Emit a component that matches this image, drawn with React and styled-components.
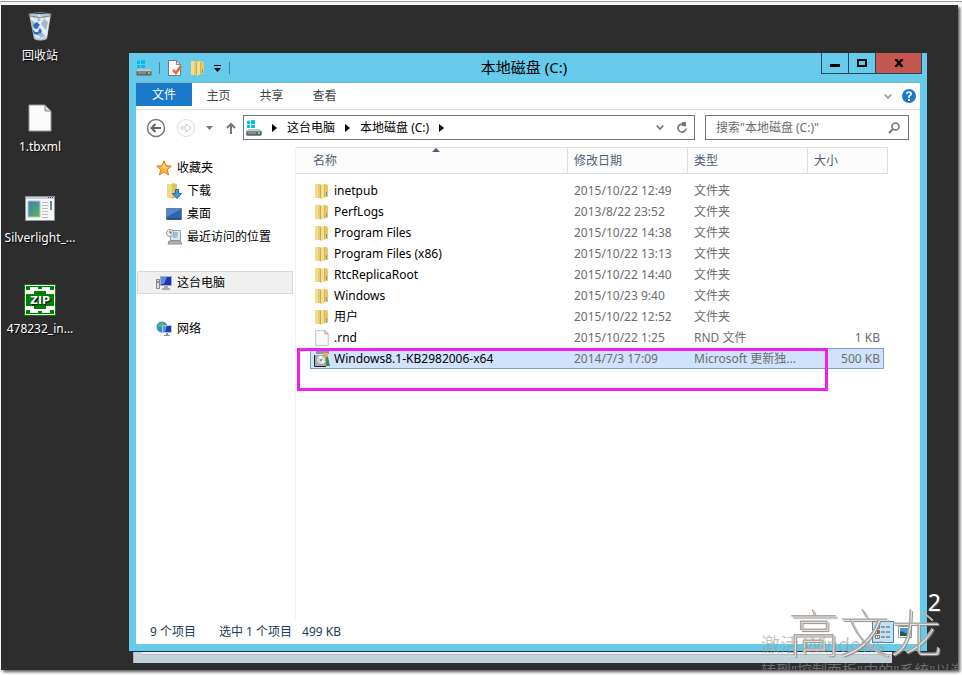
import React from 'react';
import styled, { createGlobalStyle, css } from 'styled-components';

const GlobalStyle = createGlobalStyle`
    * {
        box-sizing: border-box;
    }
    body {
        margin: 0;
        background: #fff;
        color: #000;
        font: 12px/16px "Noto Sans", "Noto Sans CJK SC", sans-serif;
    }
    button, input {
        font: inherit;
        color: inherit;
        margin: 0;
        padding: 0;
        border: 0;
        background: none;
    }
    a {
        color: inherit;
        text-decoration: none;
    }
    svg {
        display: block;
        flex: none;
    }
`

const Page = styled.div`
    display: flex;
    min-height: 100vh;
    padding: 5px 4px 5px 1px;
    background: linear-gradient(#fdfdfd 1px, #999 1px, #999 2px, #f4f4f4 2px, #f4f4f4 4px, #fff 4px);
`

const Desktop = styled.main`
    position: relative;
    flex: 1;
    overflow: hidden;
    background: #2d2d2d;
    box-shadow: 2px 2px 3px #555;
`

// ---- desktop shortcuts

const Shortcuts = styled.nav`
    display: flex;
    flex-direction: column;
    width: 78px;
`

const Shortcut = styled.a`
    display: flex;
    flex-direction: column;
    align-items: center;
    gap: 5px;
    height: 91px;
    padding-top: 6px;
    color: #fff;
    white-space: nowrap;
    text-shadow: 1px 1px 1px #000;
`

// ---- windows

const BackWindow = styled.div`
    position: absolute;
    left: 132px;
    right: 66px;
    bottom: 7px;
    height: 60px;
    padding: 0 0 8px 8px;
    background: #c2d4da;
    border-left: 1px solid #a3b3b8;
`

const BackBody = styled.div`
    height: 100%;
    background: #f0f0f0;
    border-bottom: 1px solid #aebdc2;
`

const Window = styled.section`
    position: absolute;
    top: 48px;
    left: 128px;
    right: 31px;
    bottom: 19px;
    display: flex;
    flex-direction: column;
    padding: 0 7px 7px;
    background: #66cbea;
    box-shadow: 0 1px 0 #1d3138;
`

const TitleBar = styled.header`
    display: grid;
    grid-template-columns: 1fr auto 1fr;
    height: 30px;
    flex: none;
    border-bottom: 1px solid #7fb0c2;
`

const QuickAccess = styled.div`
    display: flex;
    align-items: center;
    gap: 7px;
    button {
        display: block;
    }
`

const Divider = styled.span`
    width: 1px;
    height: 12px;
    background: #4a8299;
`

const Title = styled.h1`
    margin: 0;
    padding-right: 8px;
    font-size: 15px;
    line-height: 29px;
    font-weight: 400;
`

const WindowButtons = styled.div`
    display: flex;
    justify-self: end;
    height: 21px;
    margin-right: -2px;
`

const WindowButton = styled.button`
    display: flex;
    align-items: center;
    justify-content: center;
    width: ${props => props.$close ? '47px' : '27px'};
    border: 1px solid #1f4756;
    border-top: 0;
    ${props => !props.$close && css`border-right: 0;`}
    background: ${props => props.$close ? '#c45850' : 'transparent'};
`

const Ribbon = styled.div`
    display: flex;
    align-items: center;
    height: 27px;
    flex: none;
    padding-right: 4px;
    background: #fff;
    border-bottom: 1px solid #dadbdc;
`

const Tab = styled.button`
    width: 53px;
    height: 23px;
    color: #444;
`

const FileTab = styled(Tab)`
    width: 56px;
    align-self: flex-start;
    background: #1979ca;
    color: #fff;
`

const RibbonTools = styled.div`
    display: flex;
    align-items: center;
    gap: 10px;
    margin-left: auto;
`

const NavBar = styled.div`
    display: flex;
    align-items: center;
    height: 37px;
    flex: none;
    padding: 0 11px 2px 10px;
    background: #fff;
`

const NavButtons = styled.div`
    display: flex;
    align-items: center;
    gap: 10px;
    width: 97px;
`

const Address = styled.div`
    display: flex;
    align-items: center;
    gap: 10px;
    flex: 1;
    height: 25px;
    margin-right: 10px;
    padding: 0 6px 0 2px;
    border: 1px solid #777;
`

const AddressTools = styled.div`
    display: flex;
    align-items: center;
    gap: 12px;
    margin-left: auto;
`

const Search = styled.label`
    display: flex;
    align-items: center;
    width: 204px;
    height: 25px;
    padding: 0 8px 0 10px;
    border: 1px solid #777;
    input {
        flex: 1;
        min-width: 0;
        outline: 0;
    }
    input::placeholder {
        color: #6d6d6d;
        opacity: 1;
    }
`

const Body = styled.div`
    display: flex;
    flex: 1;
    min-height: 0;
    background: #fff;
`

const SidePane = styled.nav`
    width: 159px;
    flex: none;
    padding: 9px 2px 0 1px;
`

const PaneGroup = styled.ul`
    list-style: none;
    margin: 0 0 23px;
    padding: 0;
`

const PaneLink = styled.a`
    display: flex;
    align-items: center;
    gap: 5px;
    height: 23px;
    padding-left: ${props => props.$child ? '28px' : '18px'};
    border: 1px solid ${props => props.$current ? '#d9d9d9' : 'transparent'};
    background: ${props => props.$current ? '#f0f0f0' : 'transparent'};
    white-space: nowrap;
`

const ListPane = styled.div`
    position: relative;
    flex: 1;
    min-width: 0;
    border-left: 1px solid #f3f3f3;
`

const FileTable = styled.table`
    display: block;
    width: 592px;
    thead, tbody {
        display: block;
    }
    tbody {
        padding: 6px 4px 0 14px;
    }
    th, td {
        display: flex;
        align-items: center;
        padding: 0 6px;
        font-weight: 400;
        white-space: nowrap;
    }
`

const HeadRow = styled.tr`
    display: grid;
    grid-template-columns: 272px 120px 120px 80px;
    height: 27px;
    background: #fcfcfc;
    border: 1px solid #e0e0e0;
    border-left: 0;
    color: #4c607a;
    th {
        position: relative;
        border-right: 1px solid #e0e0e0;
    }
    th:first-child {
        padding-left: 17px;
    }
    th:last-child {
        border-right: 0;
    }
`

const SortMark = styled.svg`
    position: absolute;
    top: 0;
    left: 50%;
`

const FileRow = styled.tr`
    display: grid;
    grid-template-columns: 258px 120px 120px 76px;
    height: 21px;
    color: #6d6d6d;
    ${props => props.$selected && css`
        background: #cfe3fc;
        box-shadow: inset 0 0 0 1px #7ba0cf;
    `}
    td:first-child {
        gap: 4px;
        padding-left: 4px;
        color: #000;
    }
    td:last-child {
        justify-content: flex-end;
        padding-right: 4px;
    }
`

const Highlight = styled.div`
    position: absolute;
    top: 201px;
    left: 1px;
    width: 531px;
    height: 43px;
    border: 3px solid #f01ef0;
`

const StatusBar = styled.footer`
    display: flex;
    align-items: center;
    gap: 23px;
    height: 24px;
    flex: none;
    padding: 0 4px 0 14px;
    background: #fff;
    color: #1e395b;
`

const Selection = styled.div`
    display: flex;
    gap: 10px;
`

const ViewButtons = styled.div`
    display: flex;
    align-items: center;
    margin-left: auto;
`

const ViewButton = styled.button`
    display: flex;
    align-items: center;
    justify-content: center;
    width: 22px;
    height: 22px;
    border: 1px solid ${props => props.$active ? '#3f8ab0' : 'transparent'};
    background: ${props => props.$active ? '#c0e2f6' : 'transparent'};
`

// ---- texts lying over the corner of the desktop

const Overlay = styled.div`
    position: absolute;
    white-space: nowrap;
    pointer-events: none;
`

const Activation = styled(Overlay)`
    left: 760px;
    bottom: -11px;
    color: rgba(155, 155, 155, 0.6);
    font-size: 19px;
    line-height: 28px;
    p {
        margin: 0;
    }
    p + p {
        font-size: 15px;
        line-height: 22px;
    }
`

const Signature = styled(Overlay)`
    right: 17px;
    bottom: 10px;
    color: #aaa;
    font-family: "Noto Sans CJK SC", sans-serif;
    font-size: 51px;
    font-weight: 100;
    line-height: 60px;
    text-shadow: 1px 1px 0 #e8e2da, 2px 2px 1px #8f8a86;
`

const Counter = styled(Overlay)`
    right: 17px;
    bottom: 56px;
    color: #fff;
    font-size: 23px;
    line-height: 24px;
    text-shadow: 1px 1px 1px #555;
`

// ---- icons

const BinIcon = () => (
    <svg width="32" height="32" viewBox="0 0 32 32">
        <path d="M5 3h22l-4 25q-7 3-13 0z" fill="#b9c7d4" />
        <path d="M6 4l5 4 4-5 5 5 6-4-3 21-6 3-6-2z" fill="#e4ecf2" />
        <path d="M7 9l5 3-1 6-3-2zM20 8l4 3-2 8-5-6zM12 22l5-2 4 5-4 2zM13 5l4 4-3 2z" fill="#a3b6c7" />
        <path d="M5 3q11-3 22 0l-1 2q-10 3-20 0z" fill="none" stroke="#7c8894" />
        <path d="M9 14l4-3 3 3-2 2 1 1-4 1zM8 17l3 4h4l-1 3-4-1zM16 17l2 3-2 3-2-3z" fill="#2c69c8" />
    </svg>
)

const PageIcon = ({ size, viewBox }) => (
    <svg width={size} height={size} viewBox={viewBox}>
        <path d="M1 1h16l6 6v20H1z" fill="#fafafa" stroke="#999" />
        <path d="M17 1v6h6z" fill="#ddd" stroke="#888" />
    </svg>
)

const AppIcon = () => (
    <svg width="32" height="32" viewBox="0 0 32 32">
        <defs>
            <linearGradient id="app" x1="0" y1="0" x2="1" y2="1">
                <stop offset="0" stopColor="#4776b2" />
                <stop offset="0.5" stopColor="#4b9a8b" />
                <stop offset="1" stopColor="#62b548" />
            </linearGradient>
        </defs>
        <path d="M1.500 3.500h29v24h-29z" fill="#f7f7f7" stroke="#8d959e" />
        <path d="M2 4h28v2H2z" fill="#c6ccd4" />
        <path d="M24 4h1v1h-1zM26 4h1v1h-1zM28 4h1v1h-1z" fill="#445" />
        <path d="M4 8h12v16H4z" fill="url(#app)" stroke="#b6bfd0" />
        <path d="M18 9.500h6M18 12.500h6M18 15.500h6M18 18.500h6M18 21.500h6M18 24.500h6" stroke="#bbb" />
        <path d="M26 8h2v9h-2z" fill="url(#app)" />
    </svg>
)

const ZipIcon = () => (
    <svg width="32" height="32" viewBox="0 0 32 32">
        <path d="M0 0h32v32H0z" fill="#008000" />
        <path d="M1.500 1.500h29v29h-29z" fill="none" stroke="#fff" />
        <path d="M2 6h4V3h6v3h-2v4H2zM30 6h-4V3h-6v3h2v4h8zM2 26h4v3h6v-3h-2v-4H2zM30 26h-4v3h-6v-3h2v-4h8z" fill="#fff" />
        <path d="M10 3h12v4H10zM10 25h12v4H10z" fill="#fff" />
        <path d="M14 2h4v3h-4zM14 27h4v3h-4z" fill="#008000" />
        <text x="16" y="20" fill="#fff" fontFamily="DejaVu Sans" fontSize="11" fontWeight="700" textAnchor="middle">ZIP</text>
    </svg>
)

const DriveIcon = () => (
    <svg width="16" height="16" viewBox="0 0 16 16">
        <path d="M1 1l3-.5V4H1zM5 .3L9 0v4H5zM1 5h3v3H1zM5 5h4v3H5z" fill="#00bdf2" />
        <path d="M2 9h12l2 3H0z" fill="#c3c8cb" />
        <path d="M.5 11.500h15v3q0 1-1 1h-13q-1 0-1-1z" fill="#59666e" stroke="#7e888e" />
        <path d="M2 13h8" stroke="#a5b2b8" />
        <path d="M12 12h2v2h-2z" fill="#6fe53c" />
    </svg>
)

const PropertiesIcon = () => (
    <svg width="16" height="16" viewBox="0 0 16 16">
        <path d="M1.500.5h8l4 4v11h-12z" fill="#fafafa" stroke="#777" />
        <path d="M9.500.5v4h4z" fill="#ddd" stroke="#888" />
        <path d="M6 10l3 3 5-7" fill="none" stroke="#e56a3c" strokeWidth="2.500" />
    </svg>
)

const FolderIcon = () => (
    <svg width="16" height="16" viewBox="0 0 16 16">
        <path d="M1 1h6v14H1z" fill="#e8cc70" />
        <path d="M1 1h3v14H1z" fill="#f2dc8d" />
        <path d="M9 1h4l1 2v11H9z" fill="#e6c868" />
        <path d="M6 2l5-1v13l-4 2-1-1z" fill="#f3de93" />
        <path d="M6 2h1v13.500l-1-.5z" fill="#cfa840" />
        <path d="M10 1.500h1V14l-1 .5z" fill="#d6b34f" />
        <path d="M12 9h1v4h-1z" fill="#4aa5dc" />
    </svg>
)

const DownloadIcon = () => (
    <svg width="16" height="16" viewBox="0 0 16 16">
        <path d="M1 1h5v14H1z" fill="#f1d98a" />
        <path d="M6 0l5 1v13l-5 2z" fill="#e2be5c" />
        <path d="M9.500 6.500h3v4h3l-4.500 5-4.500-5h3z" fill="#3a9be0" stroke="#1b6bb0" />
    </svg>
)

const StarIcon = () => (
    <svg width="16" height="16" viewBox="0 0 16 16">
        <path d="M8 .8l2 5 5.400.3-4.200 3.500 1.400 5.400L8 12l-4.600 3 1.400-5.400L.6 6.100 6 5.800z" fill="#fdb73c" stroke="#e07a18" />
        <path d="M8 3l1.200 4h3L9 9l-3-2z" fill="#ffe28c" />
    </svg>
)

const ScreenIcon = () => (
    <svg width="16" height="16" viewBox="0 0 16 16">
        <path d="M.5 2.500h15v11H.5z" fill="#2d62b5" stroke="#6c8093" />
        <path d="M1 3h14l-14 8z" fill="#5287d2" />
        <path d="M1 13h14" stroke="#1c3052" />
    </svg>
)

const RecentIcon = () => (
    <svg width="16" height="16" viewBox="0 0 16 16">
        <path d="M4.500 1.500h10v10h-10z" fill="#dce8ef" stroke="#8da0ab" />
        <path d="M7 4h5M7 6h5M7 8h4" stroke="#5aa0c8" />
        <path d="M3 12h11l2 3H2z" fill="#b4bbc0" stroke="#85898c" />
        <circle cx="4" cy="4" r="3.500" fill="#f3f3f3" stroke="#999" />
        <path d="M4 2v2h2" fill="none" stroke="#555" />
    </svg>
)

const ComputerIcon = () => (
    <svg width="16" height="16" viewBox="0 0 16 16">
        <path d="M.5 4.500h3v9h-3z" fill="#ddd" stroke="#888" />
        <path d="M1 6h2v2H1z" fill="#66b75c" />
        <path d="M4.500 1.500h11v9h-11z" fill="#1d35b4" stroke="#a9adb5" />
        <path d="M5 2h6l-3 7H5z" fill="#5b8ce8" />
        <path d="M8 11h4v2h2v2H6v-2h2z" fill="#aaa" />
    </svg>
)

const NetworkIcon = () => (
    <svg width="16" height="16" viewBox="0 0 16 16">
        <circle cx="6" cy="6" r="5.500" fill="#2b8fd8" />
        <path d="M2 3l4-2 2 2-3 3H2zM6 8l3-1v3l-3 1z" fill="#58bd4d" />
        <path d="M6.500 4.500h9v7h-9z" fill="#1a3fbe" stroke="#bac5d4" />
        <path d="M7 5h4l-2 6H7z" fill="#5b94ea" />
        <path d="M10 12h2v2h2v1H8v-1h2z" fill="#88929e" />
    </svg>
)

const UpdateIcon = () => (
    <svg width="16" height="16" viewBox="0 0 16 16">
        <path d="M2 0h13v3H2z" fill="#8a97a8" />
        <path d="M9 2h5v10H9z" fill="#f3b51b" />
        <path d="M11 6h3l2 9h-5z" fill="#3a8a5a" />
        <path d="M1 4h11v11H1z" fill="#a9a9a9" />
        <path d="M.5 4v11.500H12" fill="none" stroke="#222" />
        <circle cx="7" cy="9" r="4" fill="#d6d6d6" />
        <path d="M7 9l-3-3q3-2 4-1zM7 9l4 1q-1 3-3 3z" fill="#f4f4f4" />
        <circle cx="7" cy="9" r="1" fill="#777" />
    </svg>
)

const Chevron = ({ color = '#777' }) => (
    <svg width="8" height="7" viewBox="0 0 8 7">
        <path d="M.7 1.500L4 5l3.300-3.500" fill="none" stroke={color} strokeWidth="1.800" />
    </svg>
)

const Crumb = () => (
    <svg width="5" height="8" viewBox="0 0 5 8">
        <path d="M0 0l5 4-5 4z" fill="#000" />
    </svg>
)

const RoundArrow = ({ back }) => (
    <svg width="20" height="20" viewBox="0 0 20 20">
        <circle cx="10" cy="10" r="8.500" fill="none" stroke={back ? '#777' : '#ddd'} strokeWidth={back ? 1.5 : 1} />
        {back
            ? <path d="M15 10H6M9.500 6L5.500 10l4 4" fill="none" stroke="#666" strokeWidth="2" />
            : <path d="M5 9h5V6l5 4-5 4v-3H5z" fill="none" stroke="#ccc" />}
    </svg>
)

const UpArrow = () => (
    <svg width="16" height="12" viewBox="0 0 16 12">
        <path d="M8 12V2M4 6l4-4 4 4" fill="none" stroke="#777" strokeWidth="2" />
    </svg>
)

const shortcuts = [
    { name: '回收站', icon: <BinIcon /> },
    { name: '1.tbxml', icon: <PageIcon size={32} viewBox="-4 -2 32 32" /> },
    { name: 'Silverlight_...', icon: <AppIcon /> },
    { name: '478232_in...', icon: <ZipIcon /> },
]

const places = [
    [
        { name: '收藏夹', icon: <StarIcon /> },
        { name: '下载', icon: <DownloadIcon />, child: true },
        { name: '桌面', icon: <ScreenIcon />, child: true },
        { name: '最近访问的位置', icon: <RecentIcon />, child: true },
    ],
    [{ name: '这台电脑', icon: <ComputerIcon />, current: true }],
    [{ name: '网络', icon: <NetworkIcon /> }],
]

const files = [
    { name: 'inetpub', date: '2015/10/22 12:49', type: '文件夹' },
    { name: 'PerfLogs', date: '2013/8/22 23:52', type: '文件夹' },
    { name: 'Program Files', date: '2015/10/22 14:38', type: '文件夹' },
    { name: 'Program Files (x86)', date: '2015/10/22 13:13', type: '文件夹' },
    { name: 'RtcReplicaRoot', date: '2015/10/22 14:40', type: '文件夹' },
    { name: 'Windows', date: '2015/10/23 9:40', type: '文件夹' },
    { name: '用户', date: '2015/10/22 12:52', type: '文件夹' },
    { name: '.rnd', date: '2015/10/22 1:25', type: 'RND 文件', size: '1 KB', icon: <PageIcon size={16} viewBox="0 0 24 28" /> },
    { name: 'Windows8.1-KB2982006-x64', date: '2014/7/3 17:09', type: 'Microsoft 更新独...', size: '500 KB', icon: <UpdateIcon />, selected: true },
]

const Explorer = () => (
    <Window>
        <TitleBar>
            <QuickAccess>
                <DriveIcon />
                <Divider />
                <button aria-label="属性"><PropertiesIcon /></button>
                <button aria-label="新建文件夹"><FolderIcon /></button>
                <button aria-label="自定义快速访问工具栏">
                    <svg width="9" height="8" viewBox="0 0 9 8">
                        <path d="M1 1h7v1H1zM1 4h7L4.500 8z" fill="#000" />
                    </svg>
                </button>
                <Divider />
            </QuickAccess>
            <Title>本地磁盘 (C:)</Title>
            <WindowButtons>
                <WindowButton aria-label="最小化">
                    <svg width="10" height="10" viewBox="0 0 10 10"><path d="M0 6h10v3H0z" /></svg>
                </WindowButton>
                <WindowButton aria-label="最大化">
                    <svg width="10" height="8" viewBox="0 0 10 8"><path d="M1 1h8v6H1z" fill="none" stroke="#000" strokeWidth="2" /></svg>
                </WindowButton>
                <WindowButton $close aria-label="关闭">
                    <svg width="10" height="8" viewBox="0 0 10 8"><path d="M1.500 0l7 8M8.500 0l-7 8" stroke="#000" strokeWidth="2.500" /></svg>
                </WindowButton>
            </WindowButtons>
        </TitleBar>
        <Ribbon>
            <FileTab>文件</FileTab>
            <Tab>主页</Tab>
            <Tab>共享</Tab>
            <Tab>查看</Tab>
            <RibbonTools>
                <Chevron color="#999" />
                <button aria-label="帮助">
                    <svg width="14" height="14" viewBox="0 0 14 14">
                        <circle cx="7" cy="7" r="7" fill="#1979ca" />
                        <path d="M4.800 5q0-2 2.200-2t2.200 1.800Q9.200 6 7 7.200V9" fill="none" stroke="#fff" strokeWidth="1.600" />
                        <path d="M6 10h2v2H6z" fill="#fff" />
                    </svg>
                </button>
            </RibbonTools>
        </Ribbon>
        <NavBar>
            <NavButtons>
                <button aria-label="后退"><RoundArrow back /></button>
                <button aria-label="前进"><RoundArrow /></button>
                <svg width="7" height="4" viewBox="0 0 7 4"><path d="M0 0h7L3.500 4z" fill="#777" /></svg>
                <button aria-label="上移"><UpArrow /></button>
            </NavButtons>
            <Address>
                <DriveIcon />
                <Crumb />
                <a href="#pc">这台电脑</a>
                <Crumb />
                <a href="#c">本地磁盘 (C:)</a>
                <Crumb />
                <AddressTools>
                    <Chevron />
                    <button aria-label="刷新">
                        <svg width="12" height="12" viewBox="0 0 12 12">
                            <path d="M7 2.200A4 4 0 1 0 10 6.500" fill="none" stroke="#777" strokeWidth="1.700" />
                            <path d="M6 0h4v4.500L6 4z" fill="#777" />
                        </svg>
                    </button>
                </AddressTools>
            </Address>
            <Search>
                <input type="text" aria-label="搜索" placeholder={'搜索"本地磁盘 (C:)"'} />
                <svg width="12" height="12" viewBox="0 0 12 12">
                    <circle cx="7.500" cy="4.500" r="3.500" fill="none" stroke="#777" strokeWidth="1.600" />
                    <path d="M5 7l-4 4" stroke="#777" strokeWidth="2" />
                </svg>
            </Search>
        </NavBar>
        <Body>
            <SidePane>
                {places.map((group, i) => (
                    <PaneGroup key={i}>
                        {group.map(place => (
                            <li key={place.name}>
                                <PaneLink href="#place" $child={place.child} $current={place.current}>
                                    {place.icon}
                                    {place.name}
                                </PaneLink>
                            </li>
                        ))}
                    </PaneGroup>
                ))}
            </SidePane>
            <ListPane>
                <FileTable>
                    <thead>
                        <HeadRow>
                            <th>
                                名称
                                <SortMark width="8" height="4" viewBox="0 0 8 4"><path d="M0 4l4-4 4 4z" fill="#4c607a" /></SortMark>
                            </th>
                            <th>修改日期</th>
                            <th>类型</th>
                            <th>大小</th>
                        </HeadRow>
                    </thead>
                    <tbody>
                        {files.map(file => (
                            <FileRow key={file.name} $selected={file.selected}>
                                <td>{file.icon || <FolderIcon />}{file.name}</td>
                                <td>{file.date}</td>
                                <td>{file.type}</td>
                                <td>{file.size}</td>
                            </FileRow>
                        ))}
                    </tbody>
                </FileTable>
                <Highlight />
            </ListPane>
        </Body>
        <StatusBar>
            <span>9 个项目</span>
            <Selection>
                <span>选中 1 个项目</span>
                <span>499 KB</span>
            </Selection>
            <ViewButtons>
                <ViewButton $active aria-label="详细信息">
                    <svg width="16" height="14" viewBox="0 0 16 14">
                        <path d="M.5.5h4v3h-4zM.5 5.500h4v3h-4zM.5 10.500h4v3h-4z" fill="#fff" stroke="#777" />
                        <path d="M2 1.500h1v1H2zM2 11.500h1v1H2z" fill="#333" />
                        <path d="M2 6h2v2H2z" fill="#e33" />
                        <path d="M6 2h4M11 2h4M6 7h4M11 7h4M6 12h4M11 12h4" stroke="#555" />
                    </svg>
                </ViewButton>
                <ViewButton aria-label="大图标">
                    <svg width="14" height="12" viewBox="0 0 14 12">
                        <path d="M.5.5h13v11H.5z" fill="#fff" stroke="#999" />
                        <path d="M2 2h10v8H2z" fill="#4a9ae0" />
                        <path d="M2 6q3-2 5 1l5 1v2H2z" fill="#1d5c4c" />
                    </svg>
                </ViewButton>
            </ViewButtons>
        </StatusBar>
    </Window>
)

export default () => {
    return (
        <Page>
            <GlobalStyle />
            <Desktop>
                <Shortcuts>
                    {shortcuts.map(item => (
                        <Shortcut key={item.name} href="#open">
                            {item.icon}
                            {item.name}
                        </Shortcut>
                    ))}
                </Shortcuts>
                <BackWindow><BackBody /></BackWindow>
                <Explorer />
                <Activation>
                    <p>激活 Windows</p>
                    <p>转到"控制面板"中的"系统"以激</p>
                </Activation>
                <Signature>高文龙</Signature>
                <Counter>2</Counter>
            </Desktop>
        </Page>
    )
}
